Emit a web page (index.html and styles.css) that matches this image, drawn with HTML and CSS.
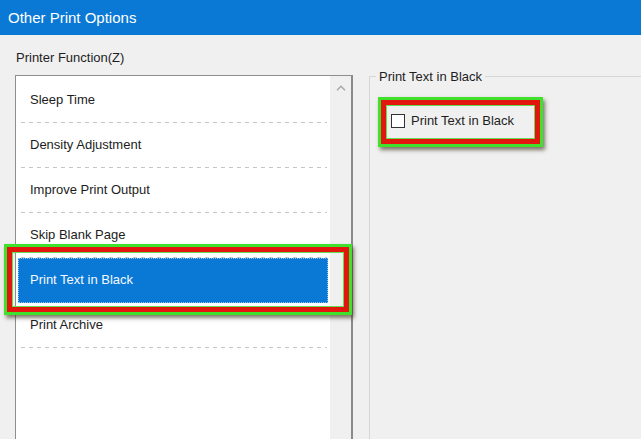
FILE: index.html
```html
<!DOCTYPE html>
<html>
<head>
<meta charset="utf-8">
<link rel="stylesheet" href="styles.css">
</head>
<body>
<div class="titlebar">Other Print Options</div>
<div class="content">
  <div class="left">
    <div class="label">Printer Function(Z)</div>
    <div class="listbox">
      <ul class="items">
        <li class="item">Sleep Time</li>
        <li class="item">Density Adjustment</li>
        <li class="item">Improve Print Output</li>
        <li class="item">Skip Blank Page</li>
        <li class="item selected">Print Text in Black</li>
        <li class="item">Print Archive</li>
      </ul>
      <div class="scrollbar">
        <svg class="chev" width="10" height="6" viewBox="0 0 10 6"><path d="M1 5.2 L5 1.2 L9 5.2" fill="none" stroke="#a6a6a6" stroke-width="1.4"/></svg>
      </div>
    </div>
  </div>
  <fieldset class="group">
    <legend class="legend">Print Text in Black</legend>
    <label class="check-row"><span class="checkbox"></span><span>Print Text in Black</span></label>
  </fieldset>
</div>
<div class="mark mark-list"></div>
<div class="mark mark-check"></div>
</body>
</html>
```
FILE: styles.css
```css
html, body {
  margin: 0;
  padding: 0;
}
body {
  position: relative;
  width: 641px;
  height: 439px;
  overflow: hidden;
  background: #f0f0f0;
  font-family: "Liberation Sans", Arial, sans-serif;
  font-size: 13px;
  color: #1e1e1e;
}
.titlebar {
  height: 35px;
  background: #0a78d5;
  color: #ffffff;
  font-size: 15px;
  display: flex;
  align-items: center;
  padding-left: 8px;
  box-sizing: border-box;
  padding-bottom: 1px;
}
.content {
  display: flex;
  align-items: flex-start;
  padding-left: 15px;
}
.left {
  width: 338px;
  padding-top: 15px;
}
.label {
  line-height: 15px;
  padding-left: 1px;
  margin-bottom: 10px;
}
.listbox {
  display: flex;
  height: 364px;
  border: 1px solid #8e8e8e;
  border-bottom: none;
  border-right: 2px solid #8a8a8a;
  background: #ffffff;
  box-sizing: border-box;
}
.items {
  flex: 1;
  list-style: none;
  margin: 0;
  padding: 2px 0 0 0;
}
.item {
  height: 45px;
  line-height: 44px;
  padding-left: 14px;
  box-sizing: border-box;
  color: #1c1c1c;
  background: repeating-linear-gradient(to right, #c6c6c6 0 4px, transparent 4px 8px) left 5px bottom / calc(100% - 8px) 1px no-repeat;
}
.item.selected {
  margin: 0 2px;
  padding-left: 12px;
  background: #0a78d5;
  color: #f4f9ff;
  outline: 1px dotted rgba(200, 225, 255, 0.7);
  outline-offset: -1px;
}
.scrollbar {
  width: 21px;
  background: #f0f0f0;
  display: flex;
  justify-content: center;
  padding-top: 9px;
  box-sizing: border-box;
}
.chev {
  display: block;
}
.group {
  margin: 34px 0 0 16px;
  padding: 0 0 0 21px;
  border: 1px solid #d6d6d6;
  border-right: none;
  border-bottom: none;
  height: 370px;
  flex: 1;
  box-sizing: border-box;
  min-width: 0;
}
.legend {
  padding: 0 3px;
  margin-left: -15px;
  line-height: 15px;
  color: #1e1e1e;
}
.check-row {
  display: flex;
  align-items: center;
  gap: 6px;
  margin-top: 29px;
  height: 15px;
  color: #1e1e1e;
}
.checkbox {
  width: 14px;
  height: 14px;
  box-sizing: border-box;
  border: 1px solid #333333;
  background: #ffffff;
}
.mark {
  position: absolute;
  box-sizing: border-box;
  border: 3px solid #3fe12c;
  box-shadow: 2px 3px 4px rgba(50, 35, 10, 0.6);
}
.mark::before {
  content: "";
  position: absolute;
  inset: 0;
  border: 5px solid #e3150f;
  box-shadow: inset 0 0 0 1px #62de4e;
}
.mark-list {
  left: 4px;
  top: 244px;
  width: 348px;
  height: 71px;
}
.mark-check {
  left: 378px;
  top: 97px;
  width: 165px;
  height: 50px;
}
```
